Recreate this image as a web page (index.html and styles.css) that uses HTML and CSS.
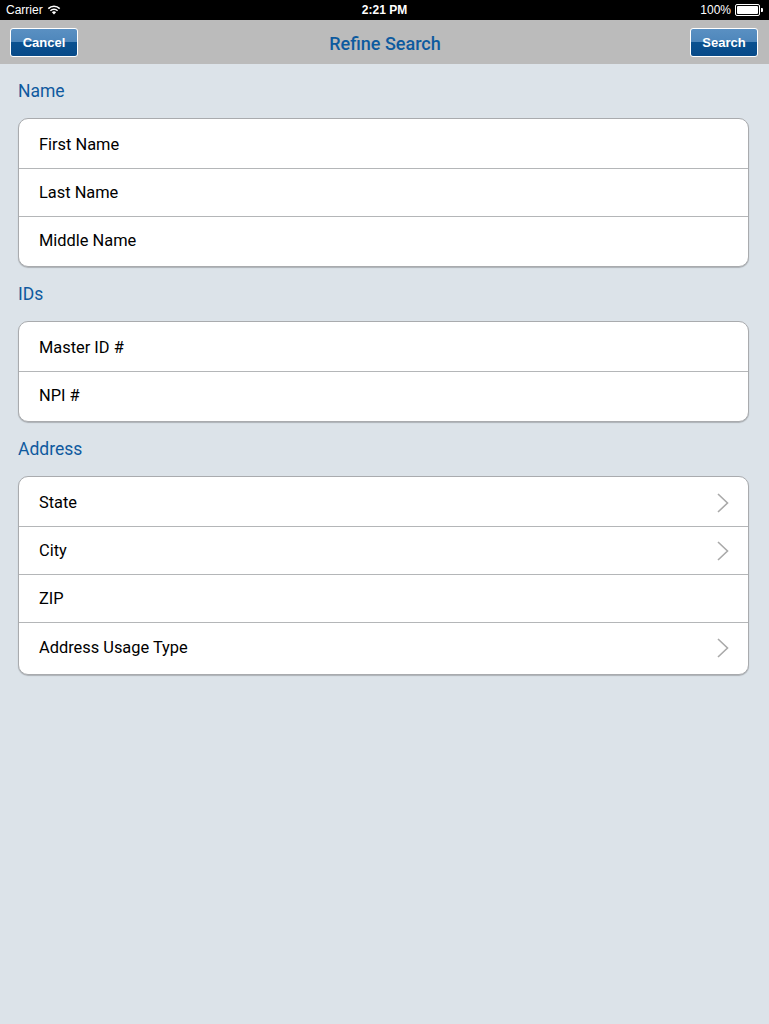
FILE: index.html
```html
<!DOCTYPE html>
<html>
<head>
<meta charset="utf-8">
<link rel="stylesheet" href="styles.css">
</head>
<body>
<div class="status">
  <div class="st-left">Carrier
    <svg class="wifi" width="14" height="10" viewBox="0 0 14 10"><path d="M7 9.6 L4.9 7.3 A3 3 0 0 1 9.1 7.3 Z" fill="#fff"/><path d="M3.4 5.8 A5.1 5.1 0 0 1 10.6 5.8" stroke="#fff" stroke-width="1.5" fill="none"/><path d="M1.3 3.6 A8 8 0 0 1 12.7 3.6" stroke="#fff" stroke-width="1.5" fill="none"/></svg>
  </div>
  <div class="st-time">2:21 PM</div>
  <div class="st-right">100% <span class="battery"><span class="bfill"></span></span><span class="bnub"></span></div>
</div>
<div class="navbar">
  <button class="nbtn">Cancel</button>
  <div class="ntitle">Refine Search</div>
  <button class="nbtn">Search</button>
</div>
<main class="content">
  <div class="sec-head">Name</div>
  <div class="card">
    <div class="row">First Name</div>
    <div class="row">Last Name</div>
    <div class="row">Middle Name</div>
  </div>
  <div class="sec-head">IDs</div>
  <div class="card">
    <div class="row">Master ID #</div>
    <div class="row">NPI #</div>
  </div>
  <div class="sec-head">Address</div>
  <div class="card">
    <div class="row">State<svg class="chev" width="12" height="20" viewBox="0 0 12 20"><path d="M1 1 L10.5 10 L1 19" stroke="#a9a9a9" stroke-width="1.6" fill="none"/></svg></div>
    <div class="row">City<svg class="chev" width="12" height="20" viewBox="0 0 12 20"><path d="M1 1 L10.5 10 L1 19" stroke="#a9a9a9" stroke-width="1.6" fill="none"/></svg></div>
    <div class="row">ZIP</div>
    <div class="row last">Address Usage Type<svg class="chev" width="12" height="20" viewBox="0 0 12 20"><path d="M1 1 L10.5 10 L1 19" stroke="#a9a9a9" stroke-width="1.6" fill="none"/></svg></div>
  </div>
</main>
</body>
</html>
```
FILE: styles.css
```css
html, body {
  margin: 0;
  padding: 0;
}
body {
  background: #dce3e9;
  font-family: Roboto, "Liberation Sans", sans-serif;
  width: 769px;
  min-height: 1024px;
}
.status {
  height: 20px;
  background: #000;
  color: #fff;
  font-family: "Liberation Sans", sans-serif;
  font-size: 12px;
  display: flex;
  align-items: center;
  justify-content: space-between;
  padding: 0 6px;
  position: relative;
}
.st-left {
  display: flex;
  align-items: center;
  gap: 4px;
}
.wifi { margin-top: -1px; }
.st-time {
  position: absolute;
  left: 0;
  right: 0;
  text-align: center;
  font-weight: bold;
  pointer-events: none;
}
.st-right {
  display: flex;
  align-items: center;
}
.battery {
  display: inline-block;
  width: 21px;
  height: 8px;
  border: 1px solid #fff;
  border-radius: 2px;
  margin-left: 4px;
  padding: 1px;
  box-sizing: content-box;
  position: relative;
}
.battery .bfill {
  display: block;
  width: 100%;
  height: 100%;
  background: #fff;
  border-radius: 1px;
}
.bnub {
  display: inline-block;
  width: 2px;
  height: 4px;
  background: #fff;
  margin-left: 1px;
  border-radius: 0 1px 1px 0;
}
.navbar {
  height: 44px;
  background: #bbbbbb;
  display: flex;
  align-items: center;
  justify-content: space-between;
  padding: 0 11px 0 10px;
}
.nbtn {
  width: 68px;
  height: 29px;
  border: 1px solid #fff;
  border-radius: 3px;
  background: linear-gradient(to bottom, #5a90c2 0%, #4d86bb 50%, #0a5190 50%, #074a88 100%);
  color: #fff;
  font-family: "Liberation Sans", Arial, sans-serif;
  font-weight: bold;
  font-size: 13px;
  padding: 0;
  margin-top: 1px;
}
.ntitle {
  color: #0d5a9f;
  font-size: 18px;
  font-weight: 500;
  margin-left: 2px;
  margin-top: 2px;
}
.content {
  padding: 0 20px 0 18px;
}
.sec-head {
  height: 54px;
  line-height: 55px;
  color: #0f5a9f;
  font-size: 17.5px;
  font-weight: 400;
}
.card {
  background: #fff;
  border: 1px solid #a9abae;
  border-radius: 10px;
  box-shadow: 0 1px 1px rgba(0, 0, 0, 0.22);
  padding-top: 2px;
  padding-bottom: 2px;
}
.row {
  height: 47px;
  display: flex;
  align-items: center;
  justify-content: space-between;
  padding: 0 19px 0 20px;
  font-size: 16.4px;
  color: #000;
}
.row + .row {
  border-top: 1px solid #b4b6b8;
}
.row.last {
  height: 49px;
}
.chev {
  display: block;
}
```
